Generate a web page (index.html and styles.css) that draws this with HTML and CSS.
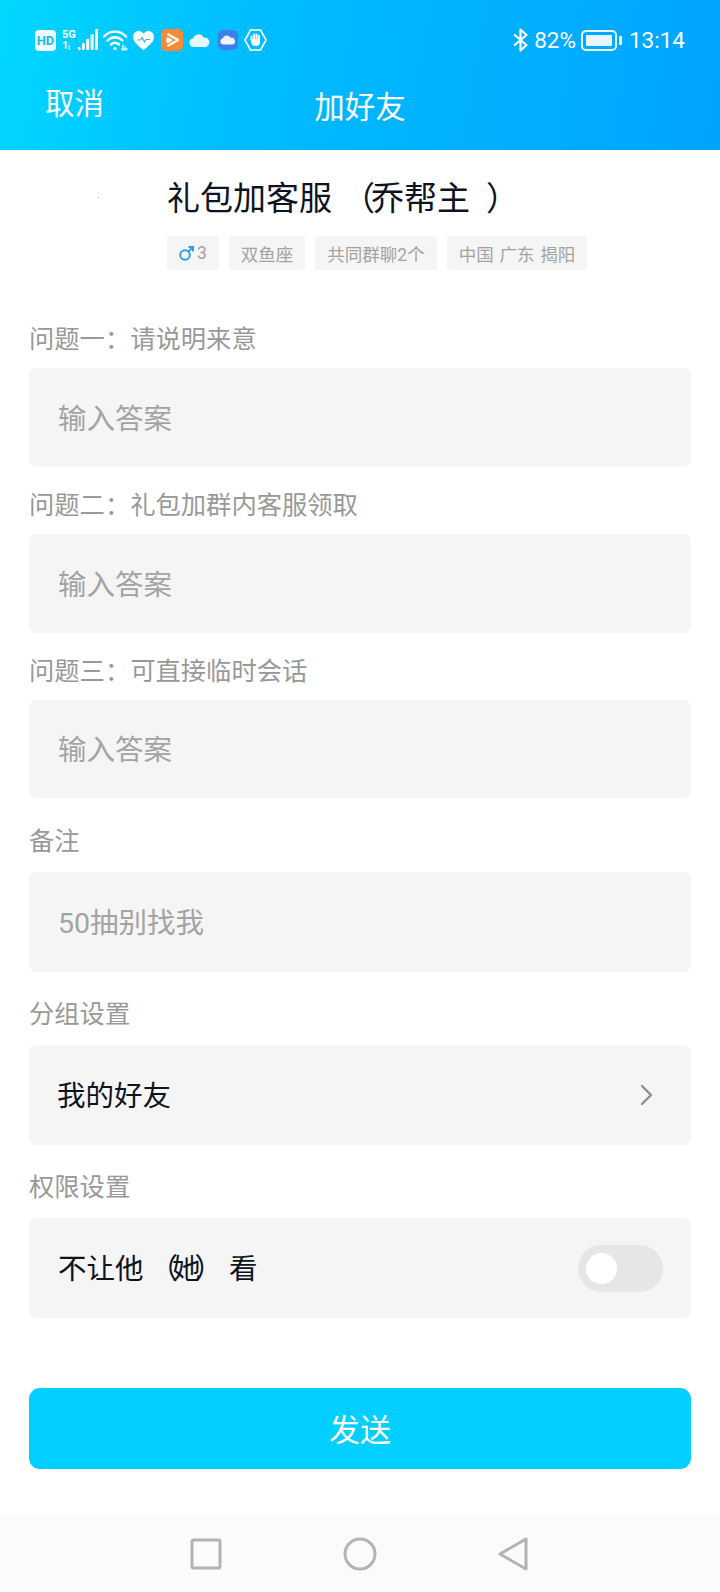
FILE: index.html
```html
<!DOCTYPE html>
<html lang="zh-CN">

<head>
    <meta charset="UTF-8">
    <title>加好友</title>
    <link rel="stylesheet" href="styles.css">
</head>

<body>
<div class="page">
    <header class="top">
        <div class="status">
            <div class="status-left">
                <span class="hd">HD</span>
                <span class="signal">
                    <span class="net"><b>5G</b><b>1ᵢ</b></span>
                    <svg width="20" height="22" viewBox="0 0 20 22" fill="#fff">
                        <rect x="0" y="18" width="2.600" height="3" rx="1"/>
                        <rect x="4" y="14" width="2.800" height="7" rx="1"/>
                        <rect x="8.200" y="10" width="3" height="11" rx="1"/>
                        <rect x="12.600" y="5" width="3" height="16" rx="1"/>
                        <rect x="17" y="0" width="3" height="21" rx="1"/>
                    </svg>
                </span>
                <svg class="ic-wifi" width="25" height="22" viewBox="0 0 25 22" fill="none" stroke="#fff" stroke-width="2.400" stroke-linecap="round">
                    <path d="M1 7.500C7 1 17 1 23 7.500"/>
                    <path d="M4.500 11.500C9 7.200 15 7.200 19.500 11.500"/>
                    <path d="M8 15.500C10.500 13.400 13.500 13.400 16 15.500"/>
                    <circle cx="12" cy="19.500" r="1.600" fill="#fff" stroke="none"/>
                    <path d="M18.500 20h6" stroke-width="1.200"/>
                    <path d="M20 16.500v5M22.500 17.500v4" stroke-width="1.400"/>
                </svg>
                <svg class="ic-heart" width="21" height="19" viewBox="0 0 21 19">
                    <path d="M10.500 19C4 14 0 10.500 0 5.800 0 2.500 2.500 0 5.600 0 7.500 0 9.400 1 10.500 2.700 11.600 1 13.500 0 15.400 0 18.500 0 21 2.500 21 5.800 21 10.500 17 14 10.500 19Z" fill="#fff"/>
                    <path d="M4 9h3.500l1.500-2.500 2.500 4.500 1.500-2.500h4" fill="none" stroke="#35b4e8" stroke-width="1.200"/>
                </svg>
                <svg class="ic-app" width="22" height="22" viewBox="0 0 22 22">
                    <rect width="22" height="22" rx="5" fill="#f58a37"/>
                    <path d="M6.500 5L17 11 6.500 17M6.500 9.500v3.500l3.500-1.800Z" fill="none" stroke="#fff" stroke-width="2.200" stroke-linejoin="round"/>
                </svg>
                <svg class="ic-cloud" width="21" height="14" viewBox="0 0 21 14">
                    <path d="M4.500 14A4.300 4.300 0 0 1 3.800 5.500 5.800 5.800 0 0 1 14.500 4.500 4.800 4.800 0 0 1 16.500 14Z" fill="#e6f7fd"/>
                </svg>
                <svg class="ic-blue" width="20" height="20" viewBox="0 0 20 20">
                    <rect width="20" height="20" rx="5" fill="#3f7fe8"/>
                    <path d="M5 14.500A3 3 0 0 1 4.500 8.600 4.300 4.300 0 0 1 12.500 7.800 3.400 3.400 0 0 1 14.500 14.500Z" fill="#eef4fd"/>
                </svg>
                <svg class="ic-hand" width="23" height="22" viewBox="0 0 23 22">
                    <path d="M6.500 1h10l5.500 10-5.500 10h-10L1 11Z" fill="none" stroke="#fff" stroke-width="1.600" stroke-linejoin="round"/>
                    <path d="M7.500 10.500V7.500M10 10V5.500M12.500 10V5.500M15 10.500V7" stroke="#fff" stroke-width="2" stroke-linecap="round"/>
                    <path d="M6.500 10h9.500v3.500c0 2-1.500 3.500-3.500 3.500h-2c-1.500 0-2.500-1-3-2.500Z" fill="#fff"/>
                </svg>
            </div>
            <div class="status-right">
                <svg class="ic-bt" width="17" height="24" viewBox="0 0 17 24" fill="none" stroke="#fff" stroke-width="2.200" stroke-linejoin="round">
                    <path d="M2 6.500L14.500 17 8.500 22.500V1.500L14.500 7 2 17.500"/>
                </svg>
                <span class="pct">82%</span>
                <span class="battery"><span class="battery-fill"></span></span>
                <span class="clock">13:14</span>
            </div>
        </div>
        <div class="bar">
            <span class="cancel">取消</span>
            <span class="bar-title">加好友</span>
        </div>
    </header>

    <main class="content">
        <section class="profile">
            <div class="avatar"><span class="avatar-dot"></span></div>
            <div class="profile-info">
                <h1 class="name">礼包加客服<span class="open-wide">（</span>乔帮主<span class="close-wide">）</span></h1>
                <div class="tags">
                    <span class="tag">
                        <svg width="15" height="15" viewBox="0 0 15 15" fill="none" stroke="#2f9fe6" stroke-width="2">
                            <circle cx="6" cy="9" r="4.800"/>
                            <path d="M9.500 5.500L14 1M9.500 1H14V5.500"/>
                        </svg>
                        3
                    </span>
                    <span class="tag">双鱼座</span>
                    <span class="tag">共同群聊2个</span>
                    <span class="tag">中国 广东 揭阳</span>
                </div>
            </div>
        </section>

        <label class="field-label">问题一：请说明来意</label>
        <div class="box">输入答案</div>
        <label class="field-label">问题二：礼包加群内客服领取</label>
        <div class="box">输入答案</div>
        <label class="field-label">问题三：可直接临时会话</label>
        <div class="box short">输入答案</div>

        <label class="field-label tall after-short">备注</label>
        <div class="box big">50抽别找我</div>

        <label class="field-label tall">分组设置</label>
        <div class="box big row dark">
            <span class="group-name">我的好友</span>
            <svg class="chevron" width="13" height="22" viewBox="0 0 13 22" fill="none" stroke="#8e8e8e" stroke-width="2.400" stroke-linecap="round" stroke-linejoin="round">
                <path d="M2 2l9 9-9 9"/>
            </svg>
        </div>

        <label class="field-label tall">权限设置</label>
        <div class="box big row dark">
            <span>不让他<span class="open-mid">（</span>她<span class="close-mid">）</span>看</span>
            <span class="switch"><span class="knob"></span></span>
        </div>

        <button class="send">发送</button>
    </main>

    <footer class="nav">
        <svg width="32" height="32" viewBox="0 0 32 32" fill="none" stroke="#b3b3b3" stroke-width="3" stroke-linejoin="round">
            <rect x="2" y="2" width="28" height="28" rx="1.500"/>
        </svg>
        <svg width="34" height="34" viewBox="0 0 34 34" fill="none" stroke="#b3b3b3" stroke-width="3">
            <circle cx="17" cy="17" r="15"/>
        </svg>
        <svg width="30" height="34" viewBox="0 0 30 34" fill="none" stroke="#b3b3b3" stroke-width="3" stroke-linejoin="round">
            <path d="M2 17L28 2V32Z"/>
        </svg>
    </footer>
</div>
</body>

</html>
```
FILE: styles.css
```css
* {
    box-sizing: border-box;
}

body {
    margin: 0;
    background-color: #fff;
    font-family: Roboto, "Noto Sans CJK SC", sans-serif;
}

.page {
    display: flex;
    flex-direction: column;
    width: 720px;
    height: 1592px;
    overflow: hidden;
}

/* gradient header with status row and title row */
.top {
    height: 150px;
    color: #fff;
    background-image: linear-gradient(100deg, #00d7ff 0%, #00bcff 35%, #00a4ff 100%);
}

.status {
    display: flex;
    justify-content: space-between;
    align-items: center;
    height: 80px;
    padding: 0 35px;
}

.status-left,
.status-right {
    display: flex;
    align-items: center;
}

.hd {
    width: 21px;
    height: 21px;
    border-radius: 4px;
    background-color: #f0fbff;
    color: #19b9f0;
    font-size: 13px;
    font-weight: 700;
    line-height: 21px;
    text-align: center;
}

.signal {
    display: flex;
    align-items: center;
    gap: 3px;
    margin-left: 6px;
}

.net {
    display: flex;
    flex-direction: column;
    width: 13px;
    font-size: 11px;
    line-height: 11px;
}

.net b {
    display: block;
    white-space: nowrap;
}

.ic-wifi {
    margin-left: 5px;
}

.ic-heart {
    margin-left: 5px;
}

.ic-app {
    margin-left: 7px;
}

.ic-cloud {
    margin-left: 6px;
}

.ic-blue {
    margin-left: 8px;
}

.ic-hand {
    margin-left: 6px;
}

.pct {
    margin-left: 5px;
    font-size: 22.500px;
}

.battery {
    position: relative;
    display: block;
    width: 36px;
    height: 21px;
    margin-left: 5px;
    margin-right: 6px;
    padding: 3px;
    border: 2px solid #e8f7ff;
    border-radius: 5px;
}

/* little nub on the right end of the battery */
.battery::after {
    content: "";
    position: absolute;
    top: 4px;
    right: -7px;
    width: 3px;
    height: 9px;
    border-radius: 1px;
    background-color: #e8f7ff;
}

.battery-fill {
    display: block;
    width: 26px;
    height: 100%;
    border-radius: 1px;
    background-color: #e8f7ff;
}

.clock {
    margin-left: 6px;
    font-size: 22.500px;
}

.bar {
    position: relative;
    height: 70px;
    padding-left: 45px;
    font-size: 29.500px;
    line-height: 49px;
}

.bar-title {
    position: absolute;
    left: 0;
    right: 0;
    top: 3px;
    font-size: 30.500px;
    text-align: center;
}

.content {
    display: flex;
    flex-direction: column;
    padding: 0 29px;
}

.profile {
    display: flex;
    height: 151px;
    padding-top: 29px;
}

.avatar {
    display: flex;
    align-items: center;
    justify-content: center;
    flex: none;
    width: 138px;
    height: 36px;
}

.avatar-dot {
    width: 1px;
    height: 1px;
    background-color: #aaa;
}

.name {
    margin: 0;
    color: #0d1322;
    font-size: 33px;
    font-weight: 400;
    line-height: 40px;
    white-space: nowrap;
}

.open-wide {
    margin-left: 10px;
    margin-right: -4px;
}

.close-wide {
    margin-left: 16px;
}

.open-mid {
    margin-left: 6px;
    margin-right: -6px;
}

.close-mid {
    margin-left: -6px;
    margin-right: 6px;
}

.tags {
    display: flex;
    gap: 10px;
    margin-top: 17px;
}

.tag {
    display: flex;
    align-items: center;
    gap: 3px;
    height: 34px;
    padding: 0 12px;
    border-radius: 3px;
    background-color: #f5f5f5;
    color: #a3a3a3;
    font-size: 17.500px;
    word-spacing: 1.500px;
    white-space: nowrap;
}

.field-label {
    display: flex;
    align-items: flex-end;
    height: 67px;
    padding-bottom: 13px;
    color: #999;
    font-size: 25.300px;
    line-height: 30px;
}

.field-label.tall {
    height: 73px;
    padding-bottom: 15px;
}

.field-label.tall.after-short {
    height: 74px;
}

.box {
    display: flex;
    align-items: center;
    height: 99px;
    padding: 0 29px 3px;
    border-radius: 8px;
    background-color: #f5f5f5;
    color: #a3a3a3;
    font-size: 28.500px;
}

.box.short {
    height: 98px;
}

.box.big {
    height: 100px;
}

.box.row {
    justify-content: space-between;
}

.box.dark {
    color: #0d1322;
}

.group-name {
    margin-left: -1px;
}

.chevron {
    margin-top: 3px;
    margin-right: 9px;
}

.switch {
    display: flex;
    align-items: center;
    width: 85px;
    height: 47px;
    margin-top: 3px;
    margin-right: -1px;
    padding-left: 8px;
    border-radius: 24px;
    background-color: #e6e6e6;
}

.knob {
    width: 31px;
    height: 31px;
    border-radius: 50%;
    background-color: #fff;
}

.send {
    height: 81px;
    margin-top: 70px;
    padding-bottom: 4px;
    border: none;
    border-radius: 11px;
    background-color: #00cfff;
    color: #fff;
    font-family: inherit;
    font-size: 31px;
}

.nav {
    display: flex;
    align-items: center;
    gap: 121px;
    height: 77px;
    margin-top: auto;
    padding-left: 190px;
    background-color: #fbfbfb;
}
```
